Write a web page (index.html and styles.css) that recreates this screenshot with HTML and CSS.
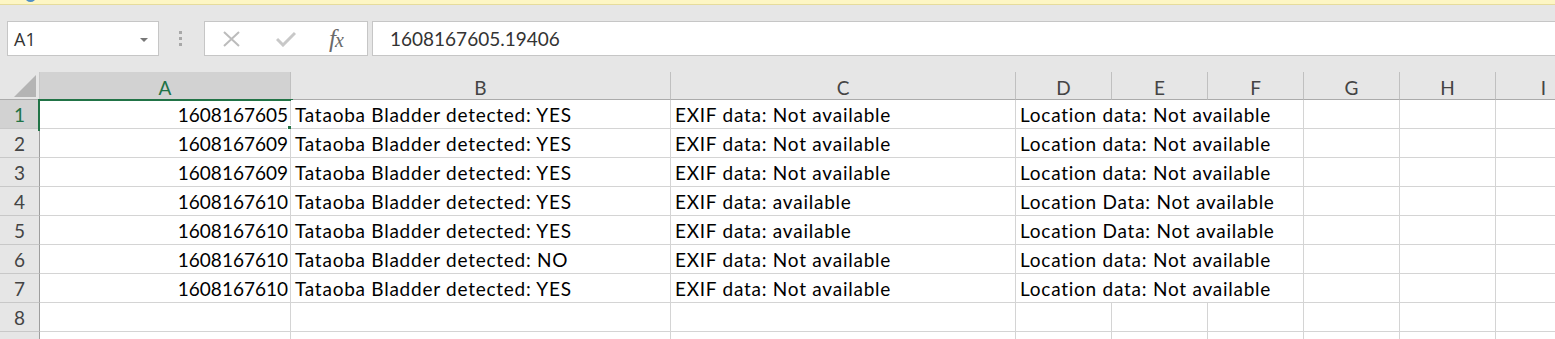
FILE: index.html
```html
<!DOCTYPE html>
<html lang="en">
<head>
  <meta charset="UTF-8">
  <title>Book1 - Excel</title>
  <link rel="stylesheet" href="styles.css">
</head>
<body>
  <div class="msgbar"><span class="msg-icon"></span></div>

  <div class="toolbar">
    <div class="namebox">
      <span>A1</span>
      <span class="caret"></span>
    </div>
    <div class="grip"><i></i><i></i><i></i></div>
    <div class="fx-buttons">
      <svg class="btn-cancel" width="19" height="16" viewBox="0 0 19 16">
        <path d="M2 1 L17 15 M17 1 L2 15" stroke="#bcbcbc" stroke-width="2" fill="none"/>
      </svg>
      <svg class="btn-enter" width="20" height="16" viewBox="0 0 20 16">
        <path d="M1 8 L7 14 L19 2" stroke="#c8c8c8" stroke-width="3" fill="none"/>
      </svg>
      <span class="fx">f<span>x</span></span>
    </div>
    <div class="formula">1608167605.19406</div>
  </div>

  <div class="sheet">
    <div class="corner"><span class="tri"></span></div>
    <div class="col-head active">A</div>
    <div class="col-head">B</div>
    <div class="col-head">C</div>
    <div class="col-head">D</div>
    <div class="col-head">E</div>
    <div class="col-head">F</div>
    <div class="col-head">G</div>
    <div class="col-head">H</div>
    <div class="col-head">I</div>

    <div class="row-head active">1</div>
    <div class="cell num">1608167605<span class="selection"><span class="handle"></span></span></div>
    <div class="cell">Tataoba Bladder detected: YES</div>
    <div class="cell">EXIF data: Not available</div>
    <div class="cell wide">Location data: Not available</div>
    <div class="cell"></div><div class="cell"></div><div class="cell"></div>

    <div class="row-head">2</div>
    <div class="cell num">1608167609</div>
    <div class="cell">Tataoba Bladder detected: YES</div>
    <div class="cell">EXIF data: Not available</div>
    <div class="cell wide">Location data: Not available</div>
    <div class="cell"></div><div class="cell"></div><div class="cell"></div>

    <div class="row-head">3</div>
    <div class="cell num">1608167609</div>
    <div class="cell">Tataoba Bladder detected: YES</div>
    <div class="cell">EXIF data: Not available</div>
    <div class="cell wide">Location data: Not available</div>
    <div class="cell"></div><div class="cell"></div><div class="cell"></div>

    <div class="row-head">4</div>
    <div class="cell num">1608167610</div>
    <div class="cell">Tataoba Bladder detected: YES</div>
    <div class="cell">EXIF data: available</div>
    <div class="cell wide">Location Data: Not available</div>
    <div class="cell"></div><div class="cell"></div><div class="cell"></div>

    <div class="row-head">5</div>
    <div class="cell num">1608167610</div>
    <div class="cell">Tataoba Bladder detected: YES</div>
    <div class="cell">EXIF data: available</div>
    <div class="cell wide">Location Data: Not available</div>
    <div class="cell"></div><div class="cell"></div><div class="cell"></div>

    <div class="row-head">6</div>
    <div class="cell num">1608167610</div>
    <div class="cell">Tataoba Bladder detected: NO</div>
    <div class="cell">EXIF data: Not available</div>
    <div class="cell wide">Location data: Not available</div>
    <div class="cell"></div><div class="cell"></div><div class="cell"></div>

    <div class="row-head">7</div>
    <div class="cell num">1608167610</div>
    <div class="cell">Tataoba Bladder detected: YES</div>
    <div class="cell">EXIF data: Not available</div>
    <div class="cell wide">Location data: Not available</div>
    <div class="cell"></div><div class="cell"></div><div class="cell"></div>

    <div class="row-head">8</div>
    <div class="cell"></div><div class="cell"></div><div class="cell"></div>
    <div class="cell"></div><div class="cell"></div><div class="cell"></div>
    <div class="cell"></div><div class="cell"></div><div class="cell"></div>

    <div class="row-head"></div>
    <div class="cell"></div><div class="cell"></div><div class="cell"></div>
    <div class="cell"></div><div class="cell"></div><div class="cell"></div>
    <div class="cell"></div><div class="cell"></div><div class="cell"></div>
  </div>
</body>
</html>
```

FILE: styles.css
```css
body {
  margin: 0;
  background: #e6e6e6;
  font-family: Lato, 'Liberation Sans', sans-serif;
  overflow: hidden;
}
.msgbar {
  height: 4px;
  background: #fdf6c4;
  border-bottom: 1px solid #e6dc9c;
  position: relative;
}
.msg-icon {
  position: absolute;
  left: 25px;
  top: -9px;
  width: 11px;
  height: 11px;
  border-radius: 50%;
  background: #4f8fc6;
}
.toolbar {
  display: flex;
  align-items: center;
  padding: 16px 0 16px 7px;
}
.namebox {
  box-sizing: border-box;
  width: 152px;
  height: 35px;
  background: #fff;
  border: 1px solid #c6c6c6;
  display: flex;
  align-items: center;
  justify-content: space-between;
  padding: 0 10px 0 6px;
  font-family: 'Open Sans', sans-serif;
  font-size: 18px;
  color: #333;
}
.caret {
  width: 0;
  height: 0;
  border-left: 4px solid transparent;
  border-right: 4px solid transparent;
  border-top: 4px solid #777;
  margin-top: 2px;
}
.grip {
  display: flex;
  flex-direction: column;
  gap: 3px;
  margin-left: 20px;
}
.grip i {
  display: block;
  width: 3px;
  height: 3px;
  background: #a8a8a8;
}
.fx-buttons {
  box-sizing: border-box;
  width: 164px;
  height: 35px;
  margin-left: 22px;
  background: #fff;
  border: 1px solid #c6c6c6;
  display: flex;
  align-items: center;
  padding-left: 17px;
}
.btn-enter {
  margin-left: 35px;
}
.fx {
  margin-left: 33px;
  font-family: 'Liberation Serif', serif;
  font-style: italic;
  font-size: 25px;
  color: #6a6a6a;
  letter-spacing: -1px;
}
.fx span {
  font-size: 20px;
}
.formula {
  box-sizing: border-box;
  flex: 1;
  height: 35px;
  margin-left: 4px;
  background: #fff;
  border: 1px solid #c6c6c6;
  border-right: none;
  display: flex;
  align-items: center;
  padding-left: 17px;
  font-size: 19px;
  color: #333;
}

.sheet {
  display: grid;
  grid-template-columns: 40px 251px 380px 345px 96px 96px 96px 96px 96px 96px;
  grid-template-rows: 28px;
  grid-auto-rows: 29px;
  font-size: 19px;
  line-height: 23px;
}
.corner {
  position: relative;
  border-right: 1px solid #c8c8c8;
  border-bottom: 1px solid #ababab;
}
.tri {
  position: absolute;
  right: 3px;
  bottom: 2px;
  width: 0;
  height: 0;
  border-left: 22px solid transparent;
  border-bottom: 22px solid #b4b4b4;
}
.col-head {
  display: flex;
  justify-content: center;
  align-items: center;
  padding-top: 3px;
  color: #444;
  border-right: 1px solid #c0c0c0;
  border-bottom: 1px solid #ababab;
}
.col-head.active {
  background: #d2d2d2;
  color: #217346;
}
.row-head {
  display: flex;
  justify-content: center;
  align-items: flex-end;
  padding-bottom: 2px;
  color: #444;
  border-right: 1px solid #9e9e9e;
  border-bottom: 1px solid #c8c8c8;
}
.row-head.active {
  background: #d2d2d2;
  color: #217346;
}
.cell {
  position: relative;
  display: flex;
  align-items: flex-end;
  padding: 0 3px 2px 4px;
  background: #fff;
  color: #000;
  white-space: nowrap;
  letter-spacing: 0.75px;
  border-right: 1px solid #d4d4d4;
  border-bottom: 1px solid #d4d4d4;
}
.cell.num {
  justify-content: flex-end;
  padding-right: 2px;
  letter-spacing: 0;
}
.cell.wide {
  grid-column: span 3;
}
.selection {
  position: absolute;
  top: -1px;
  left: -2px;
  right: -3px;
  bottom: -3px;
  border: 2px solid #217346;
}
.handle {
  position: absolute;
  right: -4px;
  bottom: -4px;
  width: 6px;
  height: 6px;
  background: #217346;
  border: 1px solid #fff;
}
```
